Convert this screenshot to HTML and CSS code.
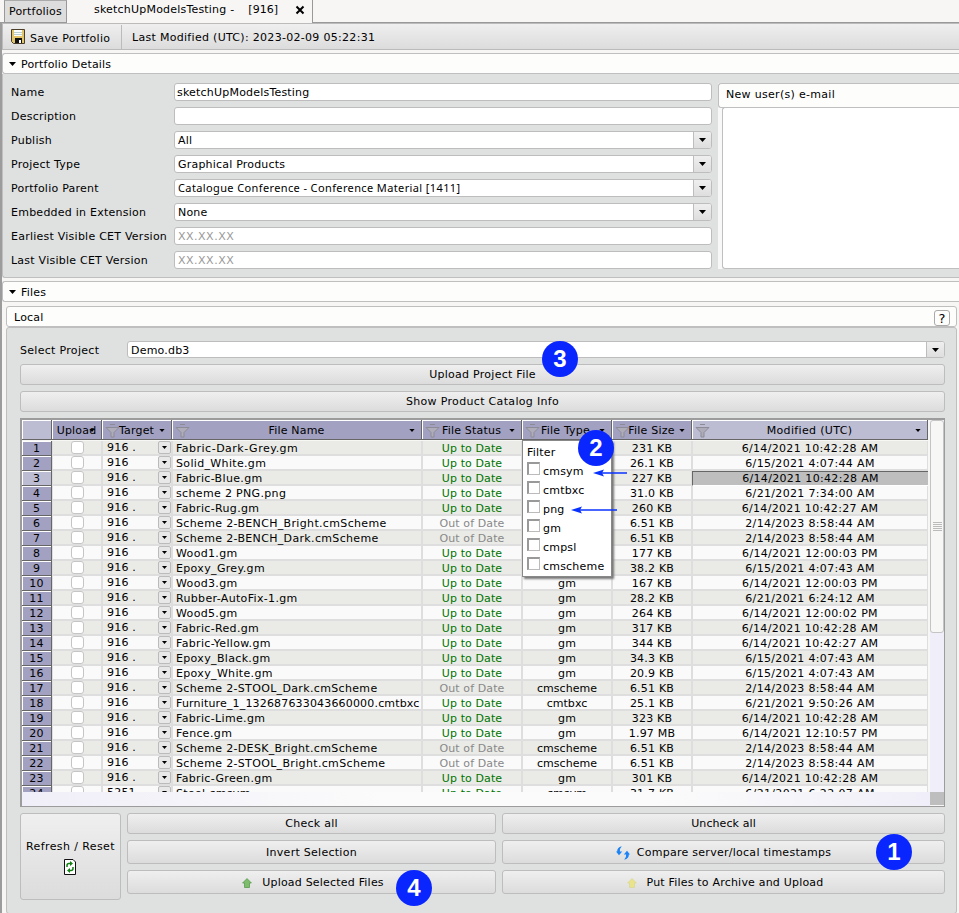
FILE: index.html
```html
<!DOCTYPE html>
<html lang="en">
<head>
<meta charset="utf-8">
<title>sketchUpModelsTesting</title>
<link rel="stylesheet" href="styles.css">
</head>
<body>
<svg class="defs" width="0" height="0">
  <symbol id="funnel" viewBox="0 0 15 15"><path d="M1 4.500h13L9 9.500V14H6V9.500z" fill="#aeacb9" stroke="#8c8b96"/><path d="M5 1.500h5M3 4.500h9" stroke="#8c8b96" fill="none"/></symbol>
  <symbol id="caret" viewBox="0 0 7 4"><path d="M0 0h7L3.500 4z"/></symbol>
</svg>
<nav class="tabs">
  <div class="stub"></div>
  <div class="tab">Portfolios</div>
  <div class="tab-active"><span class="t1">sketchUpModelsTesting -</span><span class="t2">[916]</span>
    <svg class="close" width="10" height="10" viewBox="0 0 10 10"><path d="M1.500 1.500l7 7M8.500 1.500l-7 7" stroke="#000" stroke-width="2"/></svg></div>
  <div class="rest"></div>
</nav>
<main class="page">
  <div class="toolbar">
    <svg class="save" width="14" height="15" viewBox="0 0 14 15"><path d="M.5.5h13v14h-11l-2-2z" fill="#e2c46b" stroke="#4a3d2a"/><path d="M3 1h8v6H3z" fill="#fff"/><path d="M3 3.500h8M3 5.500h8" stroke="#b9cfd0"/><path d="M4 9h7v5H4z" fill="#111"/><path d="M8 11h2v3H8z" fill="#fff"/></svg>
    <span class="save-label">Save Portfolio</span>
    <span class="modified">Last Modified (UTC): 2023-02-09 05:22:31</span>
  </div>
  <h2 class="bar details-bar"><svg class="caret"><use href="#caret"/></svg>Portfolio Details</h2>
  <section class="details">
    <div class="form">
      <label>Name</label><div class="field tight"><span>sketchUpModelsTesting</span></div>
      <label>Description</label><div class="field"></div>
      <label>Publish</label><div class="field"><span>All</span><i class="drop"><svg class="caret"><use href="#caret"/></svg></i></div>
      <label>Project Type</label><div class="field"><span>Graphical Products</span><i class="drop"><svg class="caret"><use href="#caret"/></svg></i></div>
      <label>Portfolio Parent</label><div class="field"><span class="noto">Catalogue Conference - Conference Material [1411]</span><i class="drop"><svg class="caret"><use href="#caret"/></svg></i></div>
      <label>Embedded in Extension</label><div class="field"><span>None</span><i class="drop"><svg class="caret"><use href="#caret"/></svg></i></div>
      <label>Earliest Visible CET Version</label><div class="field hint"><span>XX.XX.XX</span></div>
      <label>Last Visible CET Version</label><div class="field hint"><span>XX.XX.XX</span></div>
    </div>
    <div class="users"><div class="users-head">New user(s) e-mail</div><div class="users-list"></div></div>
  </section>
  <h2 class="bar files-bar"><svg class="caret"><use href="#caret"/></svg>Files</h2>
  <h3 class="local-bar">Local<span class="help">?</span></h3>
  <section class="local">
    <div class="project"><label>Select Project</label><div class="field"><span>Demo.db3</span><i class="drop"><svg class="caret"><use href="#caret"/></svg></i></div></div>
    <button class="btn wide">Upload Project File</button>
    <button class="btn wide catalog">Show Product Catalog Info</button>
    <div class="grid-frame">
      <div class="sheet">
        <div class="row head">
          <div class="corner"></div>
          <div class="up">Upload<svg class="caret"><use href="#caret"/></svg></div>
          <div class="target"><svg class="funnel"><use href="#funnel"/></svg>Target<svg class="caret"><use href="#caret"/></svg></div>
          <div><svg class="funnel"><use href="#funnel"/></svg>File Name<svg class="caret"><use href="#caret"/></svg></div>
          <div><svg class="funnel"><use href="#funnel"/></svg>File Status<svg class="caret"><use href="#caret"/></svg></div>
          <div class="type"><svg class="funnel"><use href="#funnel"/></svg>File Type<svg class="caret"><use href="#caret"/></svg></div>
          <div><svg class="funnel"><use href="#funnel"/></svg>File Size<svg class="caret"><use href="#caret"/></svg></div>
          <div class="sel"><svg class="funnel"><use href="#funnel"/></svg>Modified (UTC)<svg class="caret"><use href="#caret"/></svg></div>
        </div>
        <div class="rows" id="rows"></div>
      </div>
      <div class="vscroll"><div class="thumb"><i></i></div></div>
      <div class="hscroll"></div><div class="nub"></div>
      <div class="filter">
        <p>Filter</p>
        <label><i></i>cmsym</label><label><i></i>cmtbxc</label><label><i></i>png</label><label><i></i>gm</label><label><i></i>cmpsl</label><label><i></i>cmscheme</label>
      </div>
    </div>
    <div class="actions">
      <button class="btn refresh">Refresh / Reset
        <svg width="12" height="16" viewBox="0 0 12 16"><path d="M.5.500H9L11.500 3v12.500H.5z" fill="#fff" stroke="#111"/><path d="M3 8V6.500Q3 4.500 5 4.500h1M9 8v1.500Q9 11.500 7 11.500H6" fill="none" stroke="#128012" stroke-width="1.500"/><path d="M6 2l3 2.500L6 7zM6 9l-3 2.500L6 14z" fill="#128012"/></svg></button>
      <button class="btn">Check all</button>
      <button class="btn tightest">Uncheck all</button>
      <button class="btn">Invert Selection</button>
      <button class="btn compare"><svg width="14" height="14" viewBox="0 0 14 14"><path d="M5.800.300Q.800 1.500 1.200 5.500H0L3 9.300 6.200 5.500H3.900Q3.400 2.800 5.800.300zM8.200 13.700Q13.200 12.500 12.800 8.500H14L11 4.700 7.800 8.500h2.300Q10.600 11.200 8.200 13.700z" fill="#1b83f5"/></svg>Compare server/local timestamps</button>
      <button class="btn upload"><svg width="10" height="10" viewBox="0 0 10 10"><path d="M5 .6L9.400 5H7.500v4.500h-5V5H.6z" fill="#7dbd6c" stroke="#5b9a50" stroke-width=".8"/></svg>Upload Selected Files</button>
      <button class="btn archive"><svg width="10" height="10" viewBox="0 0 10 10"><path d="M5 .6L9.400 5H7.500v4.500h-5V5H.6z" fill="#e9e48c" stroke="#dcd796" stroke-width=".8"/></svg>Put Files to Archive and Upload</button>
    </div>
  </section>
</main>
<svg class="arrow a1" width="36" height="10" viewBox="0 0 36 10"><path d="M8 5h27" stroke="#0a32ff" stroke-width="1.500"/><path d="M1 5l11-3.500L10 5l2 3.500z" fill="#0a32ff"/></svg>
<svg class="arrow a2" width="48" height="10" viewBox="0 0 48 10"><path d="M8 5h39" stroke="#0a32ff" stroke-width="1.500"/><path d="M1 5l11-3.500L10 5l2 3.500z" fill="#0a32ff"/></svg>
<b class="badge b1">1</b><b class="badge b2">2</b><b class="badge b3">3</b><b class="badge b4">4</b>
<script src="rows.js"></script>
</body>
</html>
```
FILE: styles.css
```css
* { box-sizing: border-box; }
html, body { margin: 0; height: 913px; overflow: hidden; }
body { background: #f7f6f5; font: 11px/14px "DejaVu Sans", sans-serif; letter-spacing: .2px; color: #000; position: relative; width: 959px; }
.defs { position: absolute; }
h2, h3, p { margin: 0; font: inherit; }
.caret { width: 7px; height: 4px; flex: none; }

.tabs { display: flex; height: 23px; }
.stub { width: 4px; border-bottom: 1px solid #9b9b9b; }
.tab { width: 63px; border: 1px solid #999; border-top-color: #aaa; background: #dedddd; padding: 4px 0 0 4px; }
.tab-active { width: 246px; border-right: 1px solid #999; display: flex; padding: 3px 0 0 27px; }
.tab-active .t2 { margin-left: 14px; letter-spacing: 0; }
.close { margin: 2px 0 0 17px; }
.rest { flex: 1; border-bottom: 1px solid #999; }

.page { border-left: 2px solid #9c9c9c; height: 890px; }
.toolbar { height: 27px; display: flex; align-items: center; border: 1px solid #bbb; border-width: 1px 0 1px 1px; background: linear-gradient(#efefef, #dcdcdc); }
.save { margin-left: 8px; }
.save-label { width: 92px; height: 24px; margin-left: 5px; padding-top: 7px; border-right: 1px solid #bbb; letter-spacing: .33px; }
.modified { margin-left: 10px; padding-top: 2px; letter-spacing: .3px; }
.bar { height: 21px; border: 1px solid #bfbfbf; border-right: 0; border-radius: 3px 0 0 3px; background: #fdfdfc; display: flex; align-items: center; padding-top: 2px; }
.bar .caret { margin: -1px 5px 0 6px; }
.details-bar { margin-top: 3px; }
.details { height: 204px; background: #dfe1e0; border: 1px solid #bfbfbf; border-width: 0 0 1px 1px; border-radius: 0 0 0 3px; padding: 9px 0 0 8px; display: flex; }
.form { display: grid; grid-template-columns: 163px 538px; grid-auto-rows: 18px; row-gap: 6px; align-content: start; }
.form label { line-height: 18px; padding-top: 1px; white-space: nowrap; letter-spacing: .24px; }
.field { height: 18px; background: #fff; border: 1px solid #bdbdbd; border-radius: 3px; display: flex; padding-left: 3px; }
.field span { flex: 1; line-height: 17px; white-space: nowrap; }
.field.tight { padding: 0 0 0 2px; }
.field.tight span, .field.hint span { line-height: 18px; }
.field.hint { color: #999; letter-spacing: .5px; }
.drop { width: 18px; border-left: 1px solid #bdbdbd; background: linear-gradient(#efefef, #dedede); border-radius: 0 2px 2px 0; display: flex; align-items: center; justify-content: center; }
.field .noto { font-family: "Noto Sans", sans-serif; letter-spacing: .38px; line-height: 15px; }
.users { flex: 1; margin-left: 6px; height: 186px; background: #f8f8f8; }
.users-head { height: 25px; border: 1px solid #bfbfbf; border-right: 0; border-radius: 3px 0 0 3px; background: #fdfdfc; padding: 4px 0 0 7px; letter-spacing: .3px; }
.users-list { margin: -1px 0 0 4px; height: 162px; background: #fff; border: 1px solid #bfbfbf; border-right: 0; border-radius: 3px 0 0 3px; }
.files-bar { margin-top: 3px; }
.local-bar { width: 951px; height: 21px; margin: 4px 0 0 4px; border: 1px solid #bfbfbf; border-radius: 3px; background: #fdfdfc; display: flex; justify-content: space-between; align-items: center; padding: 2px 6px 0 7px; }
.help { width: 16px; height: 16px; border: 1px solid #aaa; border-radius: 3px; text-align: center; font-size: 13px; line-height: 15px; }
.local { width: 951px; height: 587px; margin-left: 4px; border: 1px solid #bfbfbf; border-radius: 3px; background: #dfe1e0; padding: 13px 11px 0 13px; }
.project { display: flex; height: 17px; }
.project label { width: 107px; padding-top: 3px; letter-spacing: .3px; }
.project .field { flex: 1; height: 17px; }
.project .field span { line-height: 17px; }
.btn { border: 1px solid #bdbdbd; border-radius: 3px; background: linear-gradient(#efefef, #dcdcdc); font: inherit; letter-spacing: .27px; color: #000; padding: 0; display: flex; align-items: center; justify-content: center; }
.btn.wide { width: 925px; height: 21px; margin-top: 6px; padding-top: 1px; }
.btn.catalog { letter-spacing: .33px; }
.btn.tightest { letter-spacing: .1px; }

.grid-frame { position: relative; margin-top: 6px; width: 925px; height: 389px; border: 2px solid #9c9c9c; border-right-width: 1px; border-bottom-width: 1px; background: #f7f7f6; display: grid; grid-template: 372px 1fr / 1fr 14px; }
.sheet { overflow: hidden; }
.row { display: grid; grid-template-columns: 30px 50px 70px 250px 100px 90px 80px 236px; height: 15px; }
.row > div { white-space: nowrap; border: 1px solid #dedede; border-width: 0 1px 2px 1px; line-height: 15px; text-align: center; height: 15px; }
.row:nth-child(odd) > div { background: #eaebe6; }
.row:nth-child(even) > div { background: #fafafa; }
.rows .row > div:nth-child(1) { background: #a2a1c2; border: 1px solid #666; border-width: 0 1px 1px 0; box-shadow: inset 1px 1px #fff; line-height: 16px; }
.rows .row > div:nth-child(2) { display: flex; justify-content: center; }
.rows .row > div:nth-child(3) { display: flex; justify-content: space-between; padding-left: 4px; line-height: 13px; }
.rows .row > div:nth-child(4) { text-align: left; padding-left: 3px; letter-spacing: .34px; }
.rows .row > div.hyphens { letter-spacing: .5px; }
.rows .row > div.long { letter-spacing: .17px; }
.rows .row > div:nth-child(5) { letter-spacing: .1px; }
.rows .row > div:nth-child(6) { letter-spacing: .05px; }
.rows .row > div:nth-child(8) { letter-spacing: .33px; }
.row .ok { color: #007500; }
.row .old { color: #888; }
.row .num3 { background: #bcbcd3 !important; }
.row .picked { background: #bebebe !important; border: 1px solid #666; border-width: 1px 0 1px 1px; line-height: 13px; border-bottom-color: #fff; }
.check { width: 13px; height: 13px; border: 1px solid #c5c5c5; border-radius: 3px; background: #fff; }
.mini { width: 13px; height: 13px; border: 1px solid #bbb; border-radius: 2px; background: #e8e8e8; display: flex; align-items: center; justify-content: center; }
.mini .caret { width: 5px; height: 3px; }
.row.head { height: 21px; }
.row.head > div { height: 20px; background: #a2a1c2; border: 1px solid #666; border-width: 0 1px 1px 0; box-shadow: inset 1px 1px #fff; position: relative; line-height: 21px; }
.row.head > .corner, .row.head > .sel { background: #bcbcd3; }
.row.head > .type { padding-right: 2px; }
.row.head > .sel { letter-spacing: .35px; }
.head .funnel { position: absolute; left: 3px; top: 3px; width: 15px; height: 15px; }
.head .caret { position: absolute; right: 6px; top: 9px; width: 6px; height: 3px; }
.vscroll { grid-column: 2; background: #f0eef8; }
.thumb { height: 213px; border: 1px solid #c4c4c4; border-radius: 3px; background: #f7f7f6; display: flex; align-items: center; justify-content: center; }
.thumb i { width: 9px; height: 9px; background: repeating-linear-gradient(#bbb 0 1px, #f7f7f6 1px 2px); }
.hscroll { background: linear-gradient(90deg, #f0eef8, #fbfbfb 40%, #fbfbfb 70%, #f0eef8); }
.nub { background: #bebebe; margin-bottom: 1px; }
.filter { position: absolute; left: 500px; top: 20px; width: 90px; height: 137px; background: #fff; border: 1px solid #888; box-shadow: 2px 2px 2px #777; padding: 4px 0 0 4px; }
.filter p { height: 17px; line-height: 15px; }
.filter label { display: flex; height: 19px; line-height: 19px; }
.filter i { width: 13px; height: 13px; border: 2px solid #999; border-right: 1px solid #bbb; border-bottom: 1px solid #bbb; margin-right: 3px; }

.actions { display: grid; margin-top: 6px; grid-template: 21px 24px 24px / 101px 369px 443px; gap: 6px; }
.actions .btn { padding-top: 1px; }
.actions .refresh { grid-row: 1 / 4; height: 87px; flex-direction: column; letter-spacing: .4px; }
.refresh svg { margin: 5px 2px 0 0; }
.compare svg { margin-right: 7px; }
.upload svg { margin-right: 10px; }
.archive svg { margin-right: 10px; }
.actions .upload, .actions .archive { padding-left: 3px; letter-spacing: .2px; }

.arrow, .badge { position: absolute; }
.a1 { left: 592px; top: 468px; }
.a2 { left: 570px; top: 505px; }
.badge { width: 36px; height: 36px; border-radius: 50%; background: #0a26ff; color: #fff; font: bold 24px/36px "Liberation Sans", sans-serif; letter-spacing: 0; text-align: center; }
.b1 { left: 876px; top: 834px; }
.b2 { left: 578px; top: 430px; }
.b3 { left: 542px; top: 341px; }
.b4 { left: 396px; top: 870px; }
```
FILE: rows.js
```js
const files = [
  ["Fabric-Dark-Grey.gm", 1, "", "231 KB", "6/14/2021 10:42:28 AM"],
  ["Solid_White.gm", 1, "", "26.1 KB", "6/15/2021 4:07:44 AM"],
  ["Fabric-Blue.gm", 1, "", "227 KB", "6/14/2021 10:42:28 AM"],
  ["scheme 2 PNG.png", 1, "", "31.0 KB", "6/21/2021 7:34:00 AM"],
  ["Fabric-Rug.gm", 1, "", "260 KB", "6/14/2021 10:42:27 AM"],
  ["Scheme 2-BENCH_Bright.cmScheme", 0, "", "6.51 KB", "2/14/2023 8:58:44 AM"],
  ["Scheme 2-BENCH_Dark.cmScheme", 0, "", "6.51 KB", "2/14/2023 8:58:44 AM"],
  ["Wood1.gm", 1, "", "177 KB", "6/14/2021 12:00:03 PM"],
  ["Epoxy_Grey.gm", 1, "", "38.2 KB", "6/15/2021 4:07:43 AM"],
  ["Wood3.gm", 1, "gm", "167 KB", "6/14/2021 12:00:03 PM"],
  ["Rubber-AutoFix-1.gm", 1, "gm", "28.2 KB", "6/21/2021 6:24:12 AM"],
  ["Wood5.gm", 1, "gm", "264 KB", "6/14/2021 12:00:02 PM"],
  ["Fabric-Red.gm", 1, "gm", "317 KB", "6/14/2021 10:42:28 AM"],
  ["Fabric-Yellow.gm", 1, "gm", "344 KB", "6/14/2021 10:42:27 AM"],
  ["Epoxy_Black.gm", 1, "gm", "34.3 KB", "6/15/2021 4:07:43 AM"],
  ["Epoxy_White.gm", 1, "gm", "20.9 KB", "6/15/2021 4:07:43 AM"],
  ["Scheme 2-STOOL_Dark.cmScheme", 0, "cmscheme", "6.51 KB", "2/14/2023 8:58:44 AM"],
  ["Furniture_1_132687633043660000.cmtbxc", 1, "cmtbxc", "25.1 KB", "6/21/2021 9:50:26 AM"],
  ["Fabric-Lime.gm", 1, "gm", "323 KB", "6/14/2021 10:42:28 AM"],
  ["Fence.gm", 1, "gm", "1.97 MB", "6/14/2021 12:10:57 PM"],
  ["Scheme 2-DESK_Bright.cmScheme", 0, "cmscheme", "6.51 KB", "2/14/2023 8:58:44 AM"],
  ["Scheme 2-STOOL_Bright.cmScheme", 0, "cmscheme", "6.51 KB", "2/14/2023 8:58:44 AM"],
  ["Fabric-Green.gm", 1, "gm", "301 KB", "6/14/2021 10:42:28 AM"],
  ["Stool.cmsym", 1, "cmsym", "31.7 KB", "6/21/2021 6:22:07 AM"]
];
const nameClass = name => name.length > 34 ? "long" : name.startsWith("Fabric-Dark") ? "hyphens" : "";
document.getElementById("rows").innerHTML = files.map(([name, ok, type, size, date], i) => `
  <div class="row">
    <div class="${i === 2 ? "num3" : ""}">${i + 1}</div>
    <div><span class="check"></span></div>
    <div><span>${i === 23 ? "5251" : i % 2 ? "916" : "916 ."}</span><span class="mini"><svg class="caret"><use href="#caret"/></svg></span></div>
    <div class="${nameClass(name)}">${name}</div>
    <div class="${ok ? "ok" : "old"}">${ok ? "Up to Date" : "Out of Date"}</div>
    <div>${type}</div><div>${size}</div>
    <div class="${i === 2 ? "picked" : ""}">${date}</div>
  </div>`).join("");
```
